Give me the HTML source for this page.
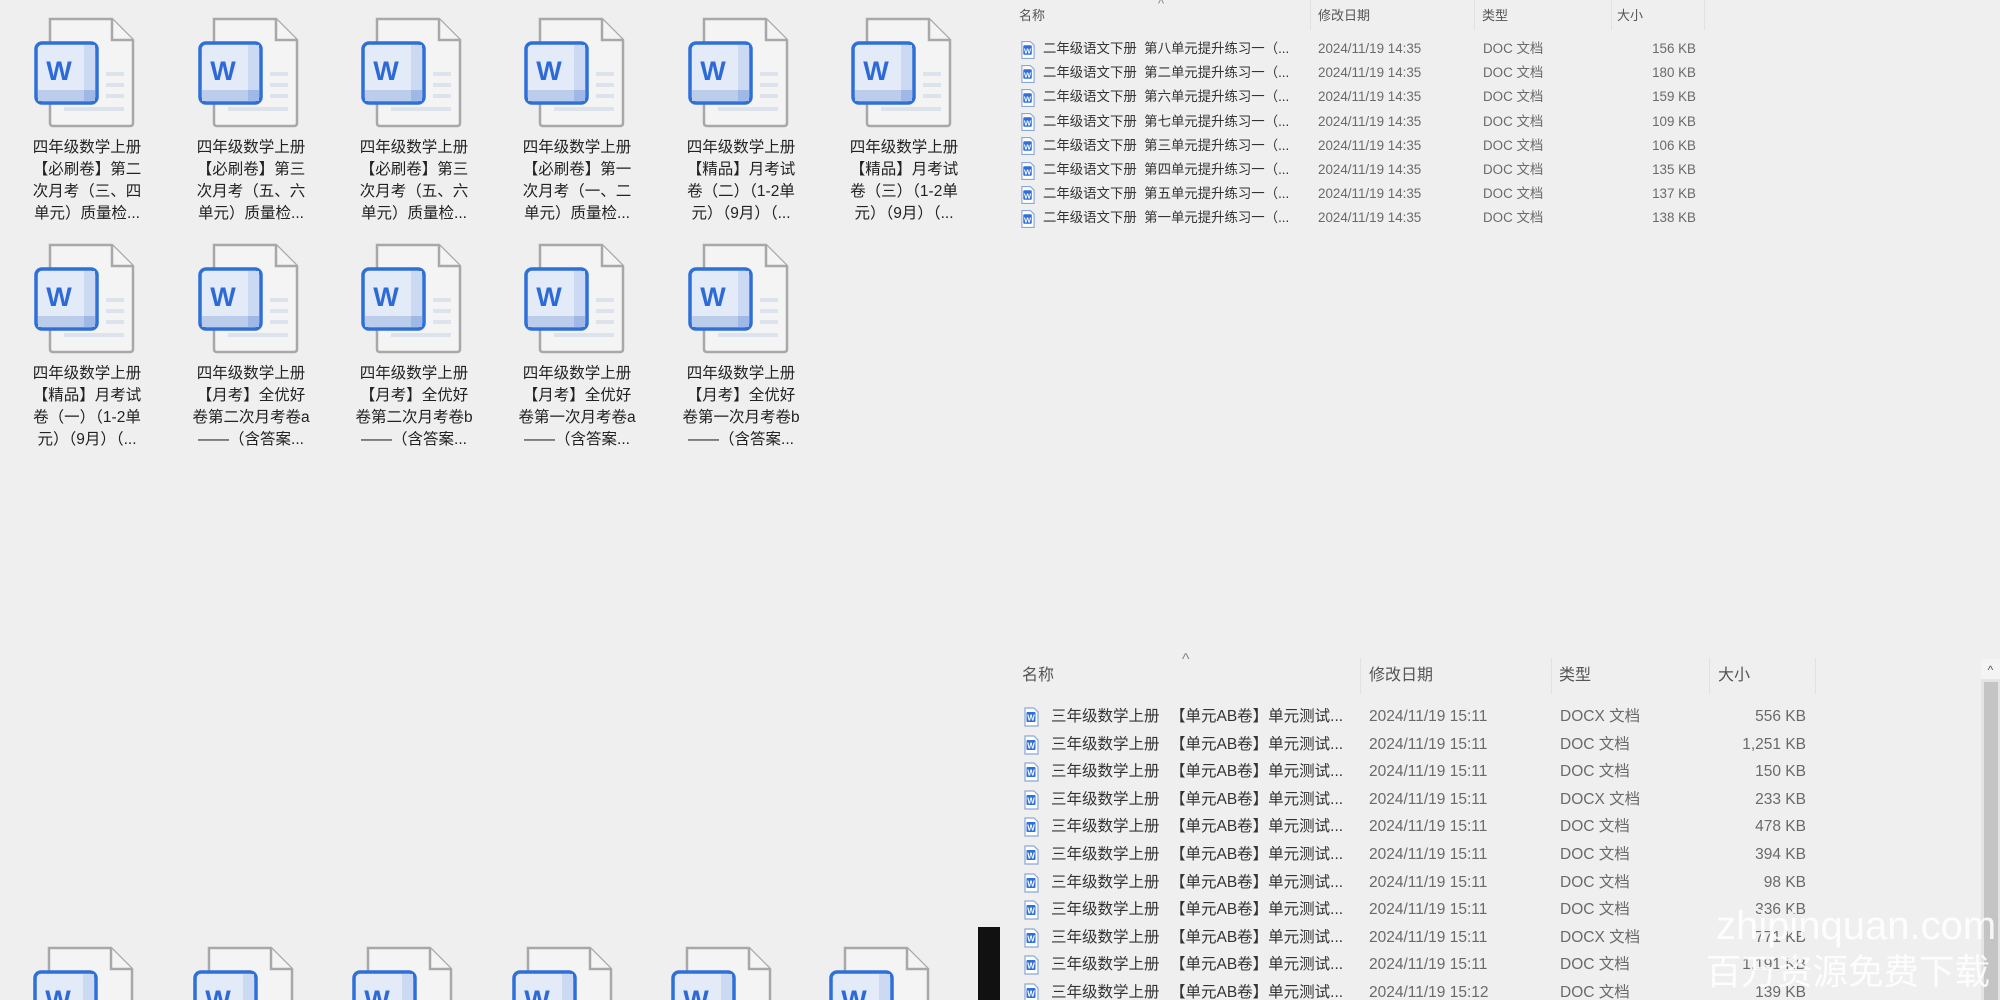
<!DOCTYPE html>
<html style="width:2000px;height:1000px;overflow:hidden"><head><meta charset="utf-8"><style>
*{margin:0;padding:0;box-sizing:border-box}
html,body{width:2000px;height:1000px;overflow:hidden}
body{background:#efefef;font-family:"Liberation Sans","Noto Sans CJK SC",sans-serif;color:#1e1e1e}
#wrap{position:relative;width:2000px;height:1000px;overflow:hidden}
.ic{position:absolute;width:110px;height:112px}
.ic3{position:absolute;width:110px;height:54px}
.lb{position:absolute;width:160px;text-align:center;font-size:15.5px;line-height:22px;white-space:nowrap;color:#222}
.t{position:absolute;white-space:nowrap;line-height:20px}
.h1{font-size:13px;color:#555}
.r1{font-size:13.4px;color:#333}
.r1.d,.r1.y,.r1.s{color:#6a6a6a}
.h2{font-size:16px;color:#555}
.r2{font-size:15.5px;color:#333;line-height:16px}
.r2.d,.r2.y,.r2.s{color:#6a6a6a}
.sep{position:absolute;width:1px;background:#e2e2e2}
</style></head><body><div id="wrap">
<svg width="0" height="0" style="position:absolute"><defs>
<g id="doc">
<path d="M16 2 H78 L99 23 V106 Q99 109 96 109 H19 Q16 109 16 106 Z" fill="#f4f4f4" stroke="#a8a8a8" stroke-width="2.5"/>
<path d="M78 2 V23 H99" fill="#f4f4f4" stroke="#a8a8a8" stroke-width="2.5"/>
<rect x="72" y="55" width="18" height="4" fill="#dde3ec"/>
<rect x="72" y="66" width="18" height="4" fill="#dde3ec"/>
<rect x="72" y="77" width="18" height="4" fill="#dde3ec"/>
<rect x="30" y="90" width="60" height="4" fill="#dde3ec"/>
<rect x="2" y="26" width="61" height="60" rx="6" fill="#e3ebf8" stroke="#2f6fd8" stroke-width="3.5"/>
<rect x="4" y="73" width="57" height="11" fill="#bccdec"/>
<rect x="50" y="28" width="11" height="56" fill="#cbd9f2"/>
<rect x="50" y="73" width="11" height="11" fill="#9fb8e6"/>
<text x="25" y="63" text-anchor="middle" font-family="Liberation Sans,sans-serif" font-weight="bold" font-size="27" fill="#2d6ad6">W</text>
</g>
<g id="sm">
<path d="M2 1 H11 L15 5 V19 H2 Z" fill="#fff" stroke="#8aa6d6" stroke-width="1.2"/>
<rect x="3.5" y="5" width="9" height="10" rx="1" fill="#2f6fd8"/>
<text x="8" y="13.5" text-anchor="middle" font-family="Liberation Sans,sans-serif" font-weight="bold" font-size="8" fill="#fff">W</text>
</g>
</defs></svg>

<svg class="ic" style="left:34px;top:17px" viewBox="0 0 110 112"><use href="#doc"/></svg>
<svg class="ic" style="left:198px;top:17px" viewBox="0 0 110 112"><use href="#doc"/></svg>
<svg class="ic" style="left:361px;top:17px" viewBox="0 0 110 112"><use href="#doc"/></svg>
<svg class="ic" style="left:524px;top:17px" viewBox="0 0 110 112"><use href="#doc"/></svg>
<svg class="ic" style="left:688px;top:17px" viewBox="0 0 110 112"><use href="#doc"/></svg>
<svg class="ic" style="left:851px;top:17px" viewBox="0 0 110 112"><use href="#doc"/></svg>
<div class="lb" style="left:7px;top:137px">四年级数学上册<br>【必刷卷】第二<br>次月考（三、四<br>单元）质量检...</div>
<div class="lb" style="left:171px;top:137px">四年级数学上册<br>【必刷卷】第三<br>次月考（五、六<br>单元）质量检...</div>
<div class="lb" style="left:334px;top:137px">四年级数学上册<br>【必刷卷】第三<br>次月考（五、六<br>单元）质量检...</div>
<div class="lb" style="left:497px;top:137px">四年级数学上册<br>【必刷卷】第一<br>次月考（一、二<br>单元）质量检...</div>
<div class="lb" style="left:661px;top:137px">四年级数学上册<br>【精品】月考试<br>卷（二）（1-2单<br>元）（9月）（...</div>
<div class="lb" style="left:824px;top:137px">四年级数学上册<br>【精品】月考试<br>卷（三）（1-2单<br>元）（9月）（...</div>
<svg class="ic" style="left:34px;top:243px" viewBox="0 0 110 112"><use href="#doc"/></svg>
<svg class="ic" style="left:198px;top:243px" viewBox="0 0 110 112"><use href="#doc"/></svg>
<svg class="ic" style="left:361px;top:243px" viewBox="0 0 110 112"><use href="#doc"/></svg>
<svg class="ic" style="left:524px;top:243px" viewBox="0 0 110 112"><use href="#doc"/></svg>
<svg class="ic" style="left:688px;top:243px" viewBox="0 0 110 112"><use href="#doc"/></svg>
<div class="lb" style="left:7px;top:363px">四年级数学上册<br>【精品】月考试<br>卷（一）（1-2单<br>元）（9月）（...</div>
<div class="lb" style="left:171px;top:363px">四年级数学上册<br>【月考】全优好<br>卷第二次月考卷a<br>——（含答案...</div>
<div class="lb" style="left:334px;top:363px">四年级数学上册<br>【月考】全优好<br>卷第二次月考卷b<br>——（含答案...</div>
<div class="lb" style="left:497px;top:363px">四年级数学上册<br>【月考】全优好<br>卷第一次月考卷a<br>——（含答案...</div>
<div class="lb" style="left:661px;top:363px">四年级数学上册<br>【月考】全优好<br>卷第一次月考卷b<br>——（含答案...</div>
<svg class="ic3" style="left:33px;top:946px" viewBox="0 0 110 54"><use href="#doc"/></svg>
<svg class="ic3" style="left:193px;top:946px" viewBox="0 0 110 54"><use href="#doc"/></svg>
<svg class="ic3" style="left:352px;top:946px" viewBox="0 0 110 54"><use href="#doc"/></svg>
<svg class="ic3" style="left:512px;top:946px" viewBox="0 0 110 54"><use href="#doc"/></svg>
<svg class="ic3" style="left:671px;top:946px" viewBox="0 0 110 54"><use href="#doc"/></svg>
<svg class="ic3" style="left:829px;top:946px" viewBox="0 0 110 54"><use href="#doc"/></svg>
<div style="position:absolute;left:978px;top:927px;width:22px;height:73px;background:#111"></div>

<div class="t h1" style="left:1158px;top:-6px;color:#888">^</div>
<div class="t h1" style="left:1019px;top:6px">名称</div>
<div class="t h1" style="left:1318px;top:6px">修改日期</div>
<div class="t h1" style="left:1482px;top:6px">类型</div>
<div class="t h1" style="left:1617px;top:6px">大小</div>
<div class="sep" style="left:1310px;top:0;height:30px"></div>
<div class="sep" style="left:1474px;top:0;height:30px"></div>
<div class="sep" style="left:1611px;top:0;height:30px"></div>
<div class="sep" style="left:1704px;top:0;height:30px"></div>
<div id="top"></div>

<div class="t h2" style="left:1182px;top:650px;color:#888">^</div>
<div class="t h2" style="left:1022px;top:666px">名称</div>
<div class="t h2" style="left:1369px;top:666px">修改日期</div>
<div class="t h2" style="left:1559px;top:666px">类型</div>
<div class="t h2" style="left:1718px;top:666px">大小</div>
<div class="sep" style="left:1360px;top:658px;height:36px"></div>
<div class="sep" style="left:1551px;top:658px;height:36px"></div>
<div class="sep" style="left:1709px;top:658px;height:36px"></div>
<div class="sep" style="left:1815px;top:658px;height:36px"></div>
<div id="bot"></div>
<div style="position:absolute;left:1981px;top:659px;width:19px;height:341px;background:#e4e4e4"></div>
<div style="position:absolute;left:1981px;top:659px;width:19px;height:20px;background:#f4f4f4;color:#555;font-size:12px;text-align:center;line-height:22px">^</div>
<div style="position:absolute;left:1984px;top:682px;width:14px;height:318px;background:#c4c4c4"></div>

<div class="t" style="left:1716px;top:903px;font-size:40px;line-height:46px;color:rgba(255,255,255,0.85)">zhipinquan.com</div>
<div class="t" style="left:1706px;top:951px;font-size:35.5px;line-height:42px;color:rgba(255,255,255,0.85)">百万资源免费下载</div>

<script>
var ord=["八","二","六","七","三","四","五","一"],sz=[156,180,159,109,106,135,137,138],h="";
for(var i=0;i<8;i++){var y=39+i*24.2;
h+='<svg style="position:absolute;left:1020px;top:'+(y+0.5)+'px" width="16" height="20" viewBox="0 0 17 20"><use href="#sm"/></svg>';
h+='<div class="t r1" style="left:1043px;top:'+y+'px">二年级语文下册&nbsp; 第'+ord[i]+'单元提升练习一（...</div>';
h+='<div class="t r1 d" style="left:1318px;top:'+y+'px">2024/11/19 14:35</div>';
h+='<div class="t r1 y" style="left:1483px;top:'+y+'px">DOC 文档</div>';
h+='<div class="t r1 s" style="left:1560px;width:136px;text-align:right;top:'+y+'px">'+sz[i]+' KB</div>';}
document.getElementById("top").outerHTML=h;
var ty=["DOCX","DOC","DOC","DOCX","DOC","DOC","DOC","DOC","DOCX","DOC","DOC"],s2=["556","1,251","150","233","478","394","98","336","771","1,191","139"];h="";
for(var i=0;i<11;i++){var y=707+i*27.6;
h+='<svg style="position:absolute;left:1023px;top:'+(y)+'px" width="17" height="20" viewBox="0 0 17 20"><use href="#sm"/></svg>';
h+='<div class="t r2" style="left:1051px;top:'+(y+2)+'px">三年级数学上册</div>';
h+='<div class="t r2" style="left:1170px;top:'+(y+2)+'px">【单元AB卷】单元测试...</div>';
h+='<div class="t r2 d" style="left:1369px;top:'+(y+2)+'px">2024/11/19 15:1'+(i==10?'2':'1')+'</div>';
h+='<div class="t r2 y" style="left:1560px;top:'+(y+2)+'px">'+ty[i]+' 文档</div>';
h+='<div class="t r2 s" style="left:1680px;width:126px;text-align:right;top:'+(y+2)+'px">'+s2[i]+' KB</div>';}
document.getElementById("bot").outerHTML=h;
</script>
</div></body></html>
